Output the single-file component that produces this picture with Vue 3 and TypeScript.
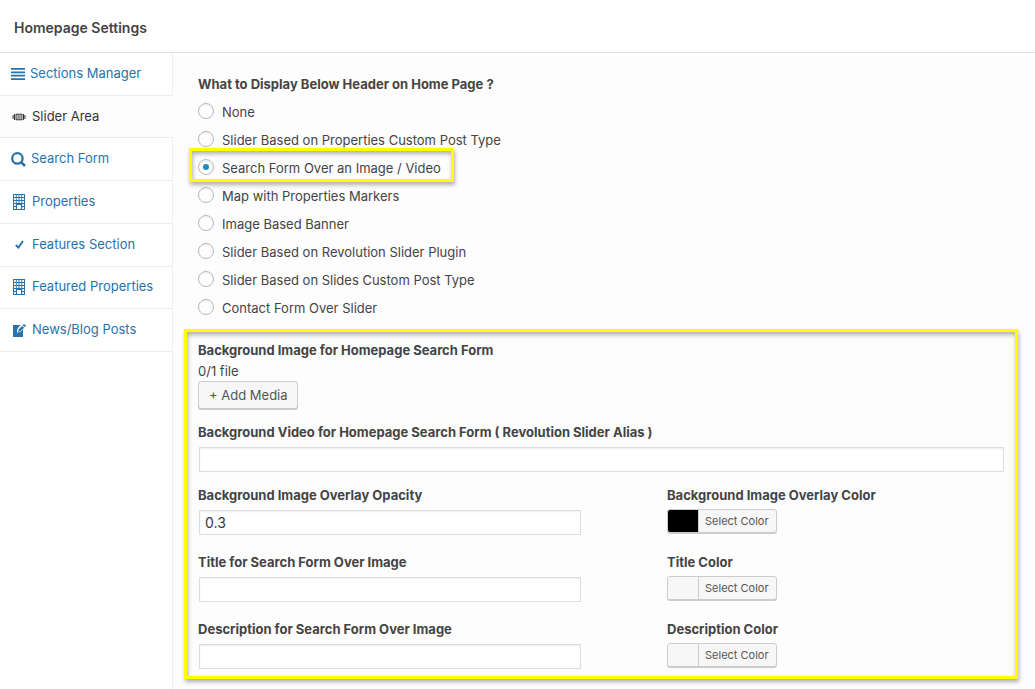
<script setup lang="ts">
import { ref } from 'vue'

type IconName = 'menu' | 'slides' | 'search' | 'building' | 'check' | 'edit'

interface NavItem {
  label: string
  icon: IconName
  active?: boolean
}

interface FieldRow {
  id: string
  label: string
  value: string
  colorLabel: string
  color: string
}

const navItems: NavItem[] = [
  { label: 'Sections Manager', icon: 'menu' },
  { label: 'Slider Area', icon: 'slides', active: true },
  { label: 'Search Form', icon: 'search' },
  { label: 'Properties', icon: 'building' },
  { label: 'Features Section', icon: 'check' },
  { label: 'Featured Properties', icon: 'building' },
  { label: 'News/Blog Posts', icon: 'edit' },
]

const options: string[] = [
  'None',
  'Slider Based on Properties Custom Post Type',
  'Search Form Over an Image / Video',
  'Map with Properties Markers',
  'Image Based Banner',
  'Slider Based on Revolution Slider Plugin',
  'Slider Based on Slides Custom Post Type',
  'Contact Form Over Slider',
]
const highlighted = options[2]
const selected = ref(highlighted)
const videoAlias = ref('')

const rows = ref<FieldRow[]>([
  { id: 'opacity', label: 'Background Image Overlay Opacity', value: '0.3', colorLabel: 'Background Image Overlay Color', color: '#000000' },
  { id: 'title', label: 'Title for Search Form Over Image', value: '', colorLabel: 'Title Color', color: '#f7f7f7' },
  { id: 'description', label: 'Description for Search Form Over Image', value: '', colorLabel: 'Description Color', color: '#f7f7f7' },
])
</script>

<template>
  <div class="settings">
    <header class="header">
      <h1>Homepage Settings</h1>
    </header>
    <div class="body">
      <nav class="nav">
        <ul>
          <li v-for="item in navItems" :key="item.label" :class="{ active: item.active }">
            <a href="#" :class="item.icon">
              <svg v-if="item.icon === 'menu'" width="14" height="12" viewBox="0 0 14 12">
                <path d="M0 0h14v1.8H0zM0 3.4h14v1.8H0zM0 6.8h14v1.8H0zM0 10.2h14V12H0z" />
              </svg>
              <svg v-else-if="item.icon === 'slides'" width="14" height="8" viewBox="0 0 14 8">
                <path d="M.6 2h1v4h-1zM2 1h1v6H2zM12.4 2h1v4h-1zM11 1h1v6h-1z" />
                <path fill-rule="evenodd" d="M3.6 .8h6.8v6.4H3.6zM4.6 1.8v4.4h4.8V1.8zM5.2 2.4h3.6v1.2H5.2zM5.2 4.4h3.6v1.2H5.2z" />
              </svg>
              <svg v-else-if="item.icon === 'search'" width="15" height="15" viewBox="0 0 15 15">
                <circle cx="6.4" cy="6.4" r="5.2" fill="none" stroke="currentColor" stroke-width="2.3" />
                <path d="M9.8 9.8l4.2 4.2" fill="none" stroke="currentColor" stroke-width="2.6" />
              </svg>
              <svg v-else-if="item.icon === 'building'" width="12" height="16" viewBox="0 0 12 16">
                <path
                  fill-rule="evenodd"
                  d="M0 0h12v16H0zM1 1v2h1.8V1zM3.7 1v2h1.8V1zM6.5 1v2h1.8V1zM9.2 1v2H11V1zM1 4v2h1.8V4zM3.7 4v2h1.8V4zM6.5 4v2h1.8V4zM9.2 4v2H11V4zM1 7v2h1.8V7zM3.7 7v2h1.8V7zM6.5 7v2h1.8V7zM9.2 7v2H11V7zM1 10v2h1.8v-2zM9.2 10v2H11v-2zM1 13v2h1.8v-2zM9.2 13v2H11v-2zM4 11v4h4v-4z"
                />
              </svg>
              <svg v-else-if="item.icon === 'check'" width="9" height="9" viewBox="0 0 9 9">
                <path d="M.8 5l2.6 2.6L8 1" fill="none" stroke="currentColor" stroke-width="1.9" />
              </svg>
              <svg v-else width="13" height="13" viewBox="0 0 13 13">
                <path d="M0 1h7.6L4.4 4.8 3.8 8.8l3.8-1L10 5.2V13H0z" />
                <path d="M10.8 0L13 1.6l-1 1.5-2.4-1.7zM9 2l2.3 1.7L7.2 7.2 5 7.9l.6-2.3z" />
              </svg>
              <span>{{ item.label }}</span>
            </a>
          </li>
        </ul>
      </nav>

      <main class="panel">
        <fieldset class="choices">
          <legend>What to Display Below Header on Home Page ?</legend>
          <label v-for="option in options" :key="option" :class="{ marked: option === highlighted }">
            <input v-model="selected" type="radio" name="below-header" :value="option" />
            <span>{{ option }}</span>
          </label>
        </fieldset>

        <section class="options">
          <h2>Background Image for Homepage Search Form</h2>
          <p>0/1 file</p>
          <button type="button" class="media">+ Add Media</button>

          <div class="field wide">
            <label for="video">Background Video for Homepage Search Form ( Revolution Slider Alias )</label>
            <input id="video" v-model="videoAlias" type="text" />
          </div>

          <div class="grid">
            <template v-for="row in rows" :key="row.id">
              <div class="field">
                <label :for="row.id">{{ row.label }}</label>
                <input :id="row.id" v-model="row.value" type="text" />
              </div>
              <div class="picker">
                <label :for="row.id + '-color'">{{ row.colorLabel }}</label>
                <button :id="row.id + '-color'" type="button">
                  <i :style="{ backgroundColor: row.color }"></i>
                  <span>Select Color</span>
                </button>
              </div>
            </template>
          </div>
        </section>
      </main>
    </div>
  </div>
</template>

<style>
body {
  margin: 0;
  background: #fff;
}
</style>

<style scoped>
.settings {
  display: flex;
  flex-direction: column;
  min-height: 100vh;
  font-family: Inter, Roboto, sans-serif;
  font-size: 13px;
  line-height: 20px;
  color: #444;
}
.settings *,
.settings *::after {
  box-sizing: border-box;
}
.header {
  padding: 18px 14px 14px;
  border-bottom: 1px solid #e2e4e7;
}
h1,
h2,
p {
  margin: 0;
}
h1 {
  font-size: 14px;
  line-height: 20px;
  font-weight: 600;
}
.body {
  display: flex;
  flex: 1;
}
.nav {
  flex: 0 0 173px;
  border-right: 1px solid #eee;
}
.nav ul {
  display: flex;
  flex-direction: column;
  min-height: 299px;
  margin: 0;
  padding: 0;
  list-style: none;
}
.nav li {
  display: flex;
  flex: 1;
  border-bottom: 1px solid #eaeaea;
}
.nav .active {
  margin-right: -1px;
  background: #fdfdfd;
}
.nav a {
  display: flex;
  flex: 1;
  align-items: center;
  gap: 6px;
  padding: 0 0 2px 12px;
  color: #2a72aa;
  text-decoration: none;
}
.nav a.menu,
.nav a.search {
  gap: 5px;
  padding-left: 11px;
}
.nav a.building {
  gap: 7px;
  padding-left: 13px;
}
.nav a.edit {
  padding-left: 13px;
}
.nav a.check {
  gap: 8px;
  padding-left: 15px;
}
.nav .active a {
  color: #333;
}
.nav svg {
  flex: none;
  margin-top: 2px;
  fill: currentColor;
}
.panel {
  flex: 1;
  min-width: 0;
  padding: 21px 17px 8px 11px;
  background: #fdfdfd;
}
.choices {
  display: flex;
  flex-direction: column;
  align-items: flex-start;
  margin: 0 0 7px;
  padding: 0 14px;
  border: 0;
}
legend,
h2,
.field label,
.picker label {
  display: block;
  padding: 0;
  font-size: 13px;
  line-height: 20px;
  font-weight: 700;
}
legend {
  margin-bottom: 4px;
}
.choices label {
  position: relative;
  display: flex;
  align-items: center;
  gap: 8px;
  height: 28px;
}
.choices input {
  display: grid;
  place-items: center;
  appearance: none;
  width: 16px;
  height: 16px;
  margin: 0 0 2px;
  border: 1px solid #b4b9be;
  border-radius: 50%;
  background: #fff;
  box-shadow: inset 0 1px 2px rgba(0, 0, 0, 0.07);
}
.choices input:checked::before {
  content: '';
  width: 6px;
  height: 6px;
  border-radius: 50%;
  background: #1e8cbe;
}
.marked::after {
  content: '';
  position: absolute;
  inset: -6px -13px 0 -9px;
  border: 3px solid #ff0;
  box-shadow: 1px 3px 4px rgba(0, 0, 0, 0.3), inset 1px 3px 4px rgba(0, 0, 0, 0.3);
  pointer-events: none;
}
.options {
  padding: 8px 11px 7px;
  border: 3px solid #ff0;
  box-shadow: 1px 3px 4px rgba(0, 0, 0, 0.3), inset 1px 3px 4px rgba(0, 0, 0, 0.3);
}
.options p {
  padding-top: 2px;
  line-height: 19px;
}
button {
  font-family: inherit;
  color: #555;
  border: 1px solid #ccc;
  border-radius: 3px;
  background: #f7f7f7;
  box-shadow: 0 1px 0 #ccc;
}
.media {
  display: block;
  height: 28px;
  padding: 0 9px 0 10px;
  font-size: 13px;
  line-height: 26px;
}
.wide {
  margin: 13px 0;
}
.field input {
  display: block;
  width: calc(100% - 1px);
  height: 25px;
  margin: 5px 0 0 1px;
  padding: 0 5px;
  border: 1px solid #ddd;
  border-radius: 0;
  background: #fff;
  box-shadow: inset 0 1px 2px rgba(0, 0, 0, 0.07);
  font-family: inherit;
  font-size: 14px;
  color: #32373c;
}
.grid {
  display: grid;
  grid-template-columns: 383fr 337fr;
  gap: 17px 86px;
}
.picker button {
  display: flex;
  height: 24px;
  margin-top: 4px;
  padding: 0;
  overflow: hidden;
  font-size: 11px;
  line-height: 22px;
}
.picker i {
  width: 30px;
}
.picker span {
  padding: 0 7px 0 6px;
  border-left: 1px solid #ccc;
}
</style>
